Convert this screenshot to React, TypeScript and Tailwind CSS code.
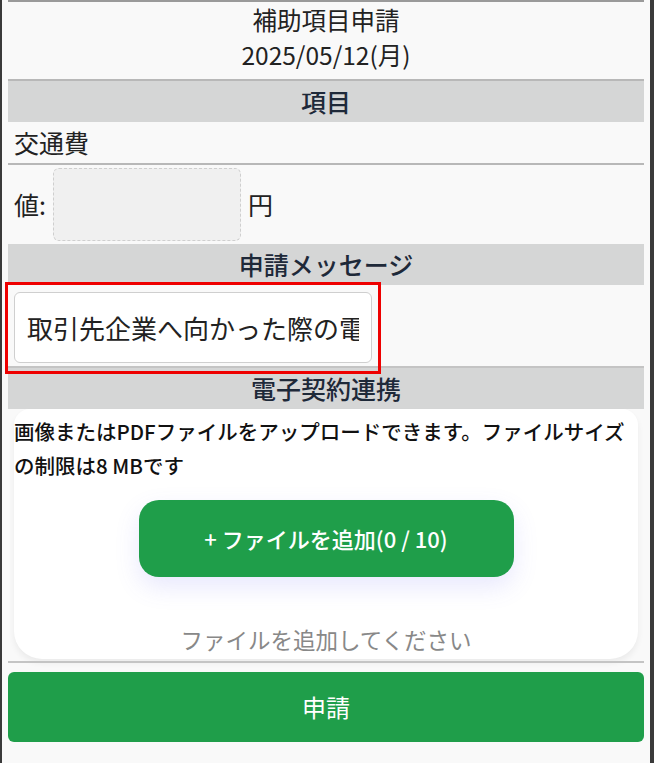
const font = {fontFamily: '"Noto Sans CJK JP", "Noto Sans", sans-serif'};

function SectionHeader({title}: {title: string}) {
	return (
		<div className="h-[41px] bg-[#d5d6d6] flex items-center justify-center text-[25px] font-medium text-[#1e2939]">
			{title}
		</div>
	);
}

export default function App() {
	return (
		<div style={font} className="w-[654px] h-[763px] bg-[#f9f9f9] border-l-[2px] border-r-[4px] border-[#3a3a3a] overflow-hidden text-[#222]">
			<div className="mx-[6px] border-t-[2px] border-[#9a9a9a]">
				<div className="flex flex-col items-center pb-[7px] text-[24.5px] leading-[35px] border-b-[2px] border-[#b8b8b8]">
					<div>補助項目申請</div>
					<div>2025/05/12(月)</div>
				</div>

				<SectionHeader title="項目" />

				<div className="h-[43px] flex items-center px-[6px] text-[25px] border-b-[2px] border-[#b8b8b8]">交通費</div>

				<div className="h-[79px] flex items-center px-[6px] text-[25px]">
					<span>値:</span>
					<div className="ml-[7px] w-[188px] h-[73px] bg-[#f0f0f0] border border-dashed border-[#cfcfcf] rounded-md" />
					<span className="ml-[7px]">円</span>
				</div>

				<SectionHeader title="申請メッセージ" />

				<div className="relative h-[83px] flex items-start pt-[7px] px-[6px] border-b-[2px] border-[#c4c4c4]">
					<div className="w-[358px] h-[71px] bg-white border border-[#cfcfcf] rounded-md flex items-center px-[12px] overflow-hidden">
						<span className="text-[26px] whitespace-nowrap overflow-hidden">取引先企業へ向かった際の電車代</span>
					</div>
					<div className="absolute left-[-3px] top-[-3px] w-[376px] h-[92px] border-[3px] border-[#ee0000]" />
				</div>

				<SectionHeader title="電子契約連携" />

				<div className="mx-[6px] bg-white rounded-b-[28px] rounded-t-[16px] shadow-[0_4px_6px_rgba(0,0,0,0.06)] flex flex-col pb-[5px]">
					<p className="text-[20.5px] leading-[34px] pt-[5px] pr-[10px] font-medium text-[#111]">
						画像またはPDFファイルをアップロードできます。ファイルサイズの制限は8 MBです
					</p>
					<div className="flex justify-center mt-[18px]">
						<button className="w-[375px] h-[77px] rounded-[20px] bg-[#1f9e4a] text-white text-[22px] font-medium shadow-[0_10px_25px_rgba(99,102,241,0.15)]">
							+ ファイルを追加(0 / 10)
						</button>
					</div>
					<div className="mt-[47px] text-center text-[22.5px] leading-[30px] text-[#888]">ファイルを追加してください</div>
				</div>

				<div className="mt-[2px] border-t-[2px] border-[#c4c4c4] pt-[9px]">
					<button className="w-full h-[70px] rounded-md bg-[#1f9e4a] text-white text-[24px]">申請</button>
				</div>
			</div>
		</div>
	);
}
